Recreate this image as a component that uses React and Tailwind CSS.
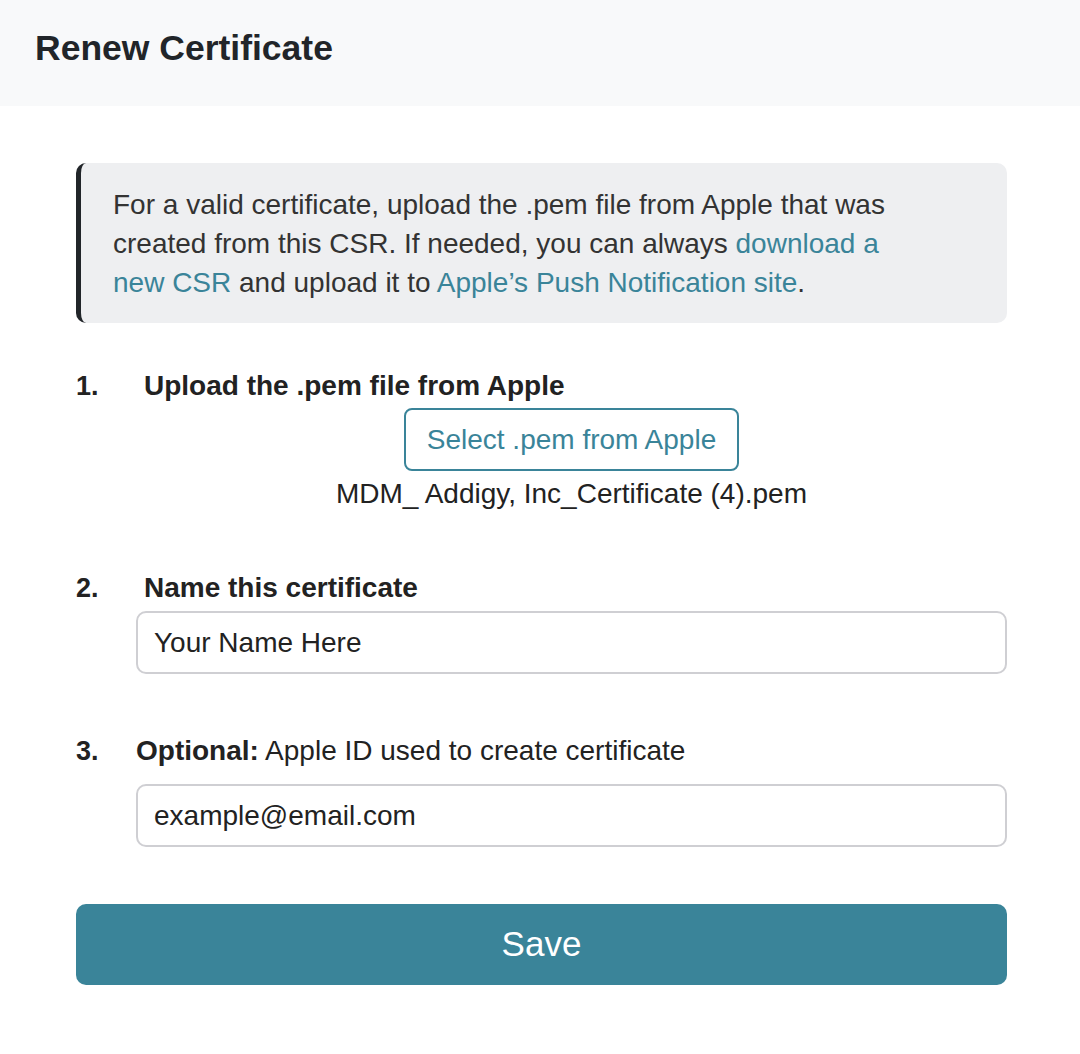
import React from 'react';

const font = { fontFamily: '"Liberation Sans", Arial, sans-serif' };

const Step = ({ num, children }) => (
  <div className="flex items-baseline">
    <span className="w-[60px] shrink-0 text-[27px] font-bold leading-[32px] text-[#222]">{num}</span>
    {children}
  </div>
);

const App = () => {
  return (
    <div className="min-h-[1054px] w-[1080px] bg-white text-[#222]" style={font}>
      <div className="h-[106px] bg-[#f8f9fa] px-[35px] pt-[28px]">
        <h1 className="text-[35.5px] font-bold leading-[40px] text-[#212529]">Renew Certificate</h1>
      </div>

      <div className="pl-[76px] pr-[73px] pt-[57px]">
        <div className="h-[160px] rounded-[10px] border-l-[5px] border-[#212529] bg-[#eeeff1] pl-[32px] pr-[90px] pt-[22px] text-[28px] leading-[39px] text-[#333]">
          For a valid certificate, upload the .pem file from Apple that was created from this CSR. If needed, you can always{' '}
          <a className="text-[#3a8499]" href="#">download a new CSR</a> and upload it to{' '}
          <a className="text-[#3a8499]" href="#">Apple’s Push Notification site</a>.
        </div>

        <div className="mt-[47px]">
          <Step num="1.">
            <span className="pl-[8px] text-[28px] font-bold leading-[32px]">Upload the .pem file from Apple</span>
          </Step>
          <div className="ml-[60px] flex flex-col items-center">
            <button className="mt-[6px] h-[63px] rounded-[8px] border-2 border-[#3a8499] px-[21px] text-[28px] text-[#3a8499]">
              Select .pem from Apple
            </button>
            <div className="mt-[7px] text-[28px] leading-[32px]">MDM_ Addigy, Inc_Certificate (4).pem</div>
          </div>
        </div>

        <div className="mt-[62px]">
          <Step num="2.">
            <span className="pl-[8px] text-[28px] font-bold leading-[32px]">Name this certificate</span>
          </Step>
          <input
            className="ml-[60px] mt-[7px] block h-[63px] w-[871px] rounded-[10px] border-2 border-[#cfcfd3] px-[16px] text-[28px] text-[#222] outline-none"
            defaultValue="Your Name Here"
          />
        </div>

        <div className="mt-[61px]">
          <Step num="3.">
            <span className="text-[28px] leading-[32px]">
              <b>Optional:</b> Apple ID used to create certificate
            </span>
          </Step>
          <input
            className="ml-[60px] mt-[17px] block h-[63px] w-[871px] rounded-[10px] border-2 border-[#cfcfd3] px-[16px] text-[28px] text-[#222] outline-none"
            defaultValue="example@email.com"
          />
        </div>

        <button className="mt-[57px] block h-[81px] w-full rounded-[10px] bg-[#3a8499] text-[35px] text-white">
          Save
        </button>
      </div>
    </div>
  );
};

export default App;
